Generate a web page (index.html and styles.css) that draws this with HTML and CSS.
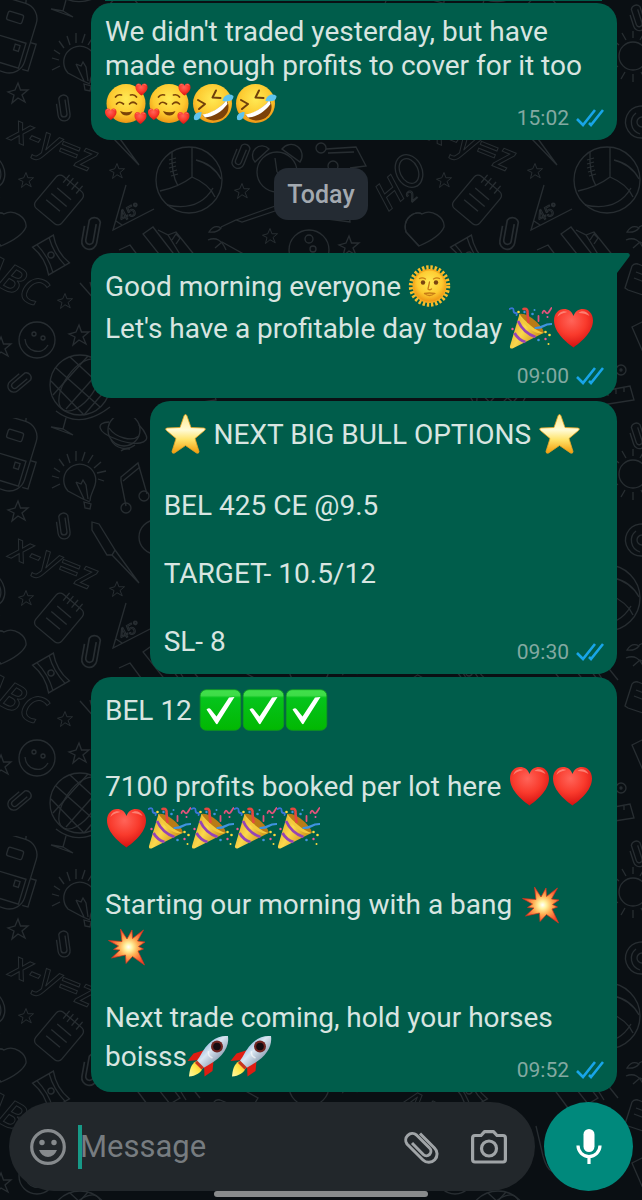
FILE: index.html
```html
<!DOCTYPE html>
<html lang="en">
<head>
    <meta charset="UTF-8">
    <meta name="viewport" content="width=device-width, initial-scale=1.0">
    <title>Chat</title>
    <link rel="stylesheet" href="styles.css">
</head>
<body>
    <!-- emoji and icon sprites -->
    <svg class="sprites" aria-hidden="true">
        <defs>
            <radialGradient id="g-face" cx="50%" cy="38%" r="62%">
                <stop offset="0" stop-color="#ffea55"/><stop offset=".65" stop-color="#fdc92f"/><stop offset="1" stop-color="#ee9514"/>
            </radialGradient>
            <radialGradient id="g-heart" cx="45%" cy="30%" r="75%">
                <stop offset="0" stop-color="#ff6459"/><stop offset=".5" stop-color="#f93a2c"/><stop offset="1" stop-color="#cf0a0c"/>
            </radialGradient>
            <linearGradient id="g-star" x1="0" y1="0" x2="0" y2="1">
                <stop offset="0" stop-color="#ffe98a"/><stop offset=".4" stop-color="#fffbd5"/><stop offset=".65" stop-color="#ffe36a"/><stop offset="1" stop-color="#f39a08"/>
            </linearGradient>
            <linearGradient id="g-check" x1="0" y1="0" x2="0" y2="1">
                <stop offset="0" stop-color="#3fe04a"/><stop offset=".14" stop-color="#3fdc48"/><stop offset=".2" stop-color="#05c41c"/><stop offset="1" stop-color="#02b802"/>
            </linearGradient>
            <linearGradient id="g-cone" x1="0" y1="0" x2="1" y2=".6">
                <stop offset="0" stop-color="#d99a1c"/><stop offset=".5" stop-color="#fbd84c"/><stop offset="1" stop-color="#c98a14"/>
            </linearGradient>
            <radialGradient id="g-burst" cx="55%" cy="50%" r="52%">
                <stop offset="0" stop-color="#ffffff"/><stop offset=".2" stop-color="#fff3a0"/><stop offset=".5" stop-color="#ffae52"/><stop offset="1" stop-color="#f5452a"/>
            </radialGradient>
            <linearGradient id="g-rocket" x1="0" y1="0" x2="1" y2="1">
                <stop offset="0" stop-color="#3f86c9"/><stop offset=".45" stop-color="#d9e6f2"/><stop offset="1" stop-color="#4d5f7c"/>
            </linearGradient>
            <linearGradient id="g-flame" x1="1" y1="0" x2="0" y2="1">
                <stop offset="0" stop-color="#ff9a1a"/><stop offset=".5" stop-color="#ffe94a"/><stop offset="1" stop-color="#fff9a8"/>
            </linearGradient>
        </defs>
        <symbol id="heart" viewBox="0 0 42 42">
            <path fill="url(#g-heart)" d="M21 40.500C15 36 1.500 26 1.500 13.500C1.500 6.500 6 2 11.500 2C16 2 19.500 4.500 21 9C22.500 4.500 26 2 30.500 2C36 2 40.500 6.500 40.500 13.500C40.500 26 27 36 21 40.500Z"/>
            <path fill="#ff9c90" opacity=".7" d="M5 10C6 5 11 3 15 5C12 6 8 6 5 10ZM26 6C29 3 35 4 37 9C34 7 30 6 26 6Z"/>
        </symbol>
        <symbol id="hearts-face" viewBox="0 0 42 42">
            <circle cx="20.500" cy="20.500" r="19.500" fill="url(#g-face)"/>
            <g fill="none" stroke="#7a4308" stroke-width="1.700" stroke-linecap="round">
                <path d="M10 14Q12 11 16 12M25 12Q29 11 31 14M11 21Q14 17.500 18 21M24 21Q27.500 17.500 31 21"/>
            </g>
            <path fill="#7a4308" d="M14.500 28Q21 30.500 27 28Q25 32.500 21 32.500Q16.500 32.500 14.500 28Z"/>
            <use href="#heart" x="29.500" y="0" width="13" height="13"/>
            <use href="#heart" x="-1" y="25" width="12.500" height="12.500"/>
            <use href="#heart" x="28.500" y="28.500" width="13" height="13"/>
        </symbol>
        <symbol id="rofl" viewBox="0 0 42 42">
            <circle cx="21" cy="20.500" r="19.500" fill="url(#g-face)"/>
            <path fill="none" stroke="#70400c" stroke-width="2" stroke-linecap="round" stroke-linejoin="round" d="M6.500 17L13.500 21L7.500 26M24.500 7.500L21 14.500L29 15"/>
            <path fill="#7c420a" d="M11 32C19 31 29 25 35 17C39 23 37 31 31 35C24 39 15 38 11 32Z"/>
            <path fill="#fff" d="M11 31.500C19 30.500 29 25 35 17L36 21C30 29 22 34 13.500 34.500Z"/>
            <path fill="#5fc4ee" d="M31 18C32 12 38 10 42 13C42 18 37 19 31 18ZM10 29C4 29 1 33 3 37C8 38 10 34 10 29Z"/>
        </symbol>
        <symbol id="sun-face" viewBox="0 0 42 42">
            <circle cx="21" cy="21" r="18.200" fill="none" stroke="#f9bd2b" stroke-width="5" stroke-dasharray="2.300 1.800"/>
            <circle cx="21" cy="21" r="17" fill="#f5a91f"/>
            <circle cx="21" cy="21" r="15.500" fill="url(#g-face)"/>
            <g fill="#7a4410"><circle cx="14.500" cy="17.500" r="2.200"/><circle cx="27.500" cy="17.500" r="2.200"/></g>
            <path fill="none" stroke="#c97d16" stroke-width="1.300" stroke-linecap="round" d="M11 13.500Q14 12 17 14M25 14Q28 12 31 13.500M21 17L19.500 24Q21 25.500 23 24M16 28.500Q21 32.500 26 28.500Q21 27.500 16 28.500"/>
        </symbol>
        <symbol id="party" viewBox="0 0 42 42">
            <path fill="url(#g-cone)" d="M10 7C16 6 34 20 34 26L3 41.500Q0 42 .500 39Z"/>
            <path fill="none" stroke="#9544b5" stroke-width="2.800" d="M8.500 14Q14 26 26 30M5 26Q9 33 16 35"/>
            <path fill="#b97b16" d="M10 7C18 5 35 20 34 26C27 27 12 15 10 7Z"/>
            <path fill="#f3c93c" d="M10 7C14 13 26 24 34 26C27 29 11 17 10 7Z"/>
            <g fill="none" stroke-linecap="round">
                <path stroke="#e54840" stroke-width="2.600" d="M14 2Q19 1 18 7L19 15"/>
                <path stroke="#3f93e0" stroke-width="2.200" d="M26 21Q31 21 34 19T42 17"/>
                <path stroke="#e4537c" stroke-width="1.800" d="M29 14V9M33 6Q34 2 36 5T40 4L42 1"/>
                <path stroke="#3a76d8" stroke-width="1.800" d="M0 2Q4 0 4 3T6 6T7 8"/>
            </g>
            <g fill="#ffd83d"><circle cx="9" cy="5" r="1.300"/><circle cx="36" cy="25" r="1.300"/><circle cx="40" cy="28" r="1.300"/><circle cx="39" cy="37" r="1"/></g>
            <g fill="#3f93e0"><circle cx="15" cy="5" r="1.200"/><circle cx="23" cy="7" r="1.300"/><circle cx="29" cy="33" r="1.300"/><circle cx="25" cy="3" r="1"/></g>
            <g fill="#ef5a9a"><circle cx="3" cy="22" r="1.200"/><circle cx="38" cy="10" r="1"/><circle cx="36" cy="32" r="1.200"/></g>
        </symbol>
        <symbol id="star" viewBox="0 0 42 42">
            <path fill="url(#g-star)" stroke="#eba522" stroke-width=".8" stroke-linejoin="round" d="M21 1.500Q22 1.500 22.500 3L26.500 14.500L39.500 15Q42 15.500 40 17.500L30.500 25.500L34.500 38.500Q34.500 41 32 40L21 32.500L10 40Q7.500 41 7.500 38.500L11.500 25.500L2 17.500Q0 15.500 2.500 15L15.500 14.500L19.500 3Q20 1.500 21 1.500Z"/>
        </symbol>
        <symbol id="check" viewBox="0 0 42 42">
            <rect x=".7" y=".7" width="40.600" height="40.600" rx="6" fill="url(#g-check)" stroke="#119b1d" stroke-width=".8"/>
            <path fill="#fff" d="M7 20.500Q9.500 18.500 11 20L17 27.500L29.500 8.500L35 8L18.500 34Q17.500 36.500 16 34Z"/>
        </symbol>
        <symbol id="burst" viewBox="0 0 42 42">
            <path fill="url(#g-burst)" stroke="#d6341f" stroke-width=".7" d="M15 4L21.500 14L26.500 5L27 13.500L38 5L32 16L39.500 17L33 21.500L38 24L32.500 26L39 40L27 31.500L20.500 38.500L20 30L6 33L14.500 25L8 24.500L13 21L3 15.500L16.500 16.500Z"/>
        </symbol>
        <symbol id="rocket" viewBox="0 0 42 42">
            <path fill="#e01d12" d="M17 15L6 18.500L0 26L12 25ZM26 26L25 36L17 41.500L16.500 30Z"/>
            <path fill="url(#g-flame)" d="M9 26C3 29 2 36 1.500 41.500C8 41 14 38 15.500 32Z"/>
            <path fill="url(#g-rocket)" d="M40.500 1C30 0 20 6 12 22L8.500 27L15 33.500L21 30C36 22 42 11 40.500 1Z"/>
            <path fill="#c7361e" d="M9.500 25.500L16.500 32.500L14 34.500L7.500 28Z"/>
            <circle cx="29.500" cy="11.500" r="6" fill="#702521"/><circle cx="29.500" cy="11.500" r="3.800" fill="#160b10"/>
            <path fill="none" stroke="#fff" stroke-width="1.600" opacity=".6" d="M21 16Q20 21 25 23"/>
        </symbol>
        <symbol id="ticks" viewBox="0 0 28 18">
            <path fill="none" stroke="#18a5e8" stroke-width="2.600" d="M1 10L7 16L19 1M13 14L15 16L27 1"/>
        </symbol>
    </svg>

    <!-- doodle wallpaper, a 418px tile -->
    <svg class="wallpaper" aria-hidden="true">
        <defs>
            <path id="d-star" d="M0-10L2.500-3L10-3L4 2L7 9L0 5L-6 10L-4 2L-10-1L-3-3Z"/>
            <path id="d-clip" d="M3-7V7A3 3 0 0 1-3 7V-9A5 5 0 0 1 6-9V8A6 6 0 0 1-6 8V-4"/>
            <g id="doodles">
                <g transform="translate(-4 32) rotate(17)">
                    <rect x="-36" y="-36" width="72" height="72" rx="16"/>
                    <path d="M-10-36Q-8-43 0-43H14Q20-42 20-36M-30 2H32V28H-30ZM36 0H42V28H36M22 6H27V12H22Z"/>
                    <rect x="6" y="-24" width="16" height="9" rx="2"/>
                </g>
                <g transform="translate(124 12)"><circle r="16"/><path d="M-15-8C-28-8-28 2-8 9C12 17 26 13 22 5Q20 0 15-5M-15-2C-8 8 8 12 15 6M-13 10A16 16 0 0 0 11 15"/></g>
                <g transform="translate(79 62)">
                    <path d="M4 19L-11 11A16 16 0 1 1 16 5C14 12 11 15 11 21M4 19L11 22M5 22L12 24L11 29L6 28ZM-3 2L5 19M-3 2L2 4L4 0L7 5L9 19"/>
                    <path d="M-19 4L-27 8M-20-2L-27-4M-19-8L-25-12M-15-14L-20-21M-9-17L-12-26M-3-19L-3-29M3-19L6-28M9-17L14-25M15-12L22-18M18-7L27-9M19-1L25 1"/>
                </g>
                <path d="M121 33Q124 30 130 31M126 88L121 63V59L138 45L147 76M123 63L140 49"/>
                <circle cx="126" cy="90" r="5"/><circle cx="144" cy="78" r="5"/>
                <path d="M92 104L99 106L115 132L112 137L107 137L92 112ZM115 132L139 165L112 137"/>
                <circle cx="156" cy="119" r="17"/>
                <use href="#d-star" x="18" y="93"/><use href="#d-star" x="79" y="335"/><use href="#d-star" x="349" y="246"/><use href="#d-star" x="1" y="347"/>
                <use href="#d-star" transform="translate(26 180) scale(.75)"/><use href="#d-star" transform="translate(117 171) scale(.75)"/>
                <use href="#d-star" transform="translate(242 191) scale(.75)"/><use href="#d-star" transform="translate(270 236) scale(.75)"/><use href="#d-star" transform="translate(65 301) scale(.75)"/>
                <use href="#d-clip" transform="translate(63 107) rotate(-8)"/><use href="#d-clip" transform="translate(241 155) rotate(22)"/>
                <use href="#d-clip" transform="translate(91 232) rotate(10) scale(1.250)"/><use href="#d-clip" transform="translate(20 381) rotate(50)"/><use href="#d-clip" transform="translate(219 17) rotate(-18)"/>
                <g transform="translate(8 139) rotate(22)"><text class="d-formula">x-y=z</text></g>
                <g transform="translate(-24 275) rotate(28)"><text class="d-formula">ABC</text></g>
                <g transform="translate(388 212) rotate(-40)"><text class="d-formula">H</text><text class="d-small" x="24" y="8">2</text></g>
                <ellipse cx="409" cy="171" rx="13" ry="17" transform="rotate(-25 409 171)"/><ellipse cx="409" cy="171" rx="9" ry="13" transform="rotate(-25 409 171)"/>
                <g transform="translate(59 200) rotate(40)"><rect x="-17" y="-21" width="34" height="42" rx="5"/><path d="M-9-8H9M-10 0H10M-10 8H8M-8-26V-16M-3-26V-16M3-26V-16M9-26V-16"/></g>
                <path d="M126 185L113 230L154 209M116 221L122 225"/>
                <g transform="translate(122 222) rotate(-28)"><text class="d-small">45°</text></g>
                <g transform="translate(189 180)"><circle r="33"/><path d="M3-32V-3Q-10 7-29 11M3-3Q20 4 26 17M7-20Q24-16 32-1M-22 25Q10 32 24 8M-17-28Q-18-6-11 6M-20-20L-13-22M-20-16L-13-18M-20-12L-13-14M-19-8L-12-10M-18-4L-11-6"/></g>
                <g transform="translate(277 172)"><circle r="20"/><path d="M-22-10A9 9 0 1 1-8-23ZM5-23A9 9 0 1 1 23-10ZM0 0L-2-14M0 0L8 6"/></g>
                <path d="M326 149L356 147L366 166L350 168M328 153L354 152"/><circle cx="321" cy="148" r="5"/><circle cx="333" cy="166" r="5"/>
                <path d="M209 232Q214 224 221 228Q217 233 209 232ZM221 227L236 220L242 222L278 210M236 220L278 205"/>
                <circle cx="309" cy="250" r="20"/><circle cx="309" cy="239" r="4"/><circle cx="313" cy="249" r="3"/>
                <path d="M1 246L-12 232C-16 218-3 210 4 214C14 208 27 218 26 227Q22 237 1 246Z"/>
                <path d="M419 246L406 232C402 218 415 210 422 214"/>
                <path d="M320 218L350 222L348 205"/>
                <g transform="translate(51 255) rotate(-30)"><path d="M-12-16H12Q6 0 12 16H-12Q-6 0-12-16ZM-7-16Q-3 0-7 16M7-16Q3 0 7 16"/><circle r="3"/></g>
                <path d="M143 234L153 227L180 262L170 268ZM158 230L168 235L186 264M168 235L176 232L200 262M119 250L130 245L150 272M172 240L176 234L180 238L176 244"/>
                <path d="M215 248L222 242L258 262L250 275"/>
                <circle cx="37" cy="340" r="18"/><circle cx="34" cy="334" r="2"/><circle cx="43" cy="338" r="2"/><path d="M25 339C26 352 42 356 48 345"/>
                <path d="M80 283L95 300L90 282"/>
                <g transform="translate(80 385)"><circle r="30"/><ellipse rx="15" ry="30" transform="rotate(35)"/><path d="M-24-17L20 22M-29-4L4 30M-10-28L29 8M-27 10L8-29M-14 24L24-19M4 30L30 0M-24 26Q0 45 30 22M-14 33L-17 44L-29 42L-7 50L-17 44"/></g>
                <g transform="translate(215 56)"><circle r="14"/><path d="M0-18V-25M7-16L11-23M14-11L20-16M17-4L25-6M-7-16L-11-23M-14-11L-20-16M-17-4L-25-6M-18 3H-26M-15 10L-21 14M-8 16L-12 23M0 18V26M8 16L12 23"/></g>
                <path d="M224 138A16 16 0 1 1 236 112Q238 128 228 126M222 134A12 12 0 0 1 218 113"/><circle cx="224" cy="122" r="5"/>
                <path d="M207 288L214 266Q216 263 220 264L250 276L240 300L210 290ZM218 272L244 282M216 278L242 288M208 240Q220 235 226 250"/>
                <path d="M214 327L224 322L236 340L224 350Z"/><circle cx="203" cy="370" r="5"/><circle cx="203" cy="370" r="1"/>
                <path d="M180 392L212 386L216 400L184 405M190 391V396M198 389V394M206 388V392M118 290L125 320Q132 346 148 330L170 300"/>
            </g>
            <pattern id="doodle-tile" width="418" height="418" patternUnits="userSpaceOnUse">
                <use href="#doodles"/><use href="#doodles" x="-418"/><use href="#doodles" x="418"/><use href="#doodles" y="-418"/>
            </pattern>
        </defs>
        <rect class="tiles" width="100%" height="100%" fill="url(#doodle-tile)"/>
    </svg>

    <main class="chat">
        <div class="previous"></div>

        <div class="bubble">
            <p>We didn't traded yesterday, but have made enough profits to cover for it too<br>
            <svg class="emoji"><use href="#hearts-face"/></svg><svg class="emoji"><use href="#hearts-face"/></svg><svg class="emoji"><use href="#rofl"/></svg><svg class="emoji"><use href="#rofl"/></svg></p>
            <div class="meta"><time>15:02</time><svg class="ticks"><use href="#ticks"/></svg></div>
        </div>

        <div class="day">Today</div>

        <div class="bubble first">
            <svg class="tail" viewBox="0 0 13 20"><path d="M0 0H11Q14 1 12 4L0 20Z"/></svg>
            <p>Good morning everyone <svg class="emoji"><use href="#sun-face"/></svg><br>
            Let's have a profitable day today <svg class="emoji"><use href="#party"/></svg><svg class="emoji"><use href="#heart"/></svg></p>
            <p><br></p>
            <div class="meta"><time>09:00</time><svg class="ticks"><use href="#ticks"/></svg></div>
        </div>

        <div class="bubble signal">
            <p><svg class="emoji"><use href="#star"/></svg> NEXT BIG BULL OPTIONS <svg class="emoji"><use href="#star"/></svg></p>
            <p><br>BEL 425 CE @9.5</p>
            <p><br>TARGET- 10.5/12</p>
            <p><br>SL- 8</p>
            <div class="meta"><time>09:30</time><svg class="ticks"><use href="#ticks"/></svg></div>
        </div>

        <div class="bubble">
            <p>BEL 12 <svg class="emoji"><use href="#check"/></svg><svg class="emoji"><use href="#check"/></svg><svg class="emoji"><use href="#check"/></svg></p>
            <p><br>7100 profits booked per lot here <svg class="emoji"><use href="#heart"/></svg><svg class="emoji"><use href="#heart"/></svg><br>
            <svg class="emoji"><use href="#heart"/></svg><svg class="emoji"><use href="#party"/></svg><svg class="emoji"><use href="#party"/></svg><svg class="emoji"><use href="#party"/></svg><svg class="emoji"><use href="#party"/></svg></p>
            <p><br>Starting our morning with a bang <svg class="emoji"><use href="#burst"/></svg><br>
            <svg class="emoji"><use href="#burst"/></svg></p>
            <p><br>Next trade coming, hold your horses boisss<svg class="emoji"><use href="#rocket"/></svg><svg class="emoji"><use href="#rocket"/></svg></p>
            <div class="meta"><time>09:52</time><svg class="ticks"><use href="#ticks"/></svg></div>
        </div>
    </main>

    <footer>
        <form class="composer">
            <div class="field">
                <button type="button" class="icon-btn" aria-label="Emoji">
                    <svg width="36" height="36" viewBox="0 0 36 36">
                        <circle cx="18" cy="18" r="16.300" fill="none" stroke="currentColor" stroke-width="3.200"/>
                        <circle cx="12" cy="13.500" r="2.700" fill="currentColor"/><circle cx="24" cy="13.500" r="2.700" fill="currentColor"/>
                        <path d="M9 21H27Q24 28 18 28T9 21Z" fill="currentColor"/>
                    </svg>
                </button>
                <span class="caret"></span>
                <input type="text" placeholder="Message" aria-label="Message">
                <button type="button" class="icon-btn light" aria-label="Attach">
                    <svg width="38" height="38" viewBox="0 0 38 38" fill="none" stroke="currentColor" stroke-width="3">
                        <path d="M18 5.500L32.500 20A8.300 8.300 0 0 1 21 32L5 16A6.600 6.600 0 0 1 14.500 7L27.500 20A4.400 4.400 0 0 1 21.300 26.500L10 15"/>
                    </svg>
                </button>
                <button type="button" class="icon-btn light" aria-label="Camera">
                    <svg width="38" height="36" viewBox="0 0 38 36" fill="none" stroke="currentColor" stroke-width="3.200">
                        <path stroke-linejoin="round" d="M5 6.500H11L14.500 2.600H23.500L27 6.500H33Q35.400 6.500 35.400 9V30.500Q35.400 33 33 33H5Q2.600 33 2.600 30.500V9Q2.600 6.500 5 6.500Z"/>
                        <circle cx="19" cy="19.500" r="7.500"/>
                    </svg>
                </button>
            </div>
            <button type="button" class="mic" aria-label="Voice message">
                <svg width="28" height="38" viewBox="0 0 28 38">
                    <rect x="8.500" y="1" width="11" height="23" rx="5.500" fill="#fff"/>
                    <path d="M3 17.500A11 11 0 0 0 25 17.500M14 28.500V36" fill="none" stroke="#fff" stroke-width="3.200"/>
                </svg>
            </button>
        </form>
        <div class="handle"></div>
    </footer>
</body>
</html>
```
FILE: styles.css
```css
* {
    box-sizing: border-box;
}
body {
    font-family: Roboto, sans-serif;
    margin: 0;
    min-height: 100vh;
    display: flex;
    flex-direction: column;
    background-color: #0a0f13;
    color: #d8e5e1;
}
.sprites {
    position: absolute;
    width: 0;
    height: 0;
}
.wallpaper {
    position: fixed;
    top: 0;
    left: 0;
    width: 100%;
    height: 100%;
    z-index: -1;
    fill: none;
    stroke: #272d31;
    stroke-width: 1.3px;
}
.tiles {
    stroke: none;
}
#doodles {
    stroke: #272d31;
}
.d-formula {
    font-family: "Open Sans", sans-serif;
    font-size: 38px;
    font-style: italic;
    font-weight: 600;
    stroke-width: 1px;
}
.d-small {
    font-size: 15px;
    stroke-width: 1px;
}

/* messages */
.chat {
    display: flex;
    flex-direction: column;
}
.previous {
    height: 1px;
    margin: 0 40px 2px 105px;
    background-color: #005d4b;
}
.bubble {
    position: relative;
    margin: 0 25px 3px 91px;
    padding: 12px 14px 15px;
    border-radius: 20px;
    background-color: #005d4b;
    font-size: 28px;
    line-height: 34px;
}
.bubble p {
    margin: 0;
}
.first {
    border-top-right-radius: 0;
}
.tail {
    position: absolute;
    top: 0;
    left: 100%;
    width: 13px;
    height: 20px;
    fill: #005d4b;
}
.signal {
    align-self: flex-end;
    padding-right: 36px;
}
.emoji {
    width: 43px;
    height: 42px;
    vertical-align: -11px;
}
.meta {
    position: absolute;
    right: 13px;
    bottom: 9px;
    display: flex;
    align-items: center;
    gap: 7px;
    font-size: 21px;
    line-height: 26px;
    color: #83a9a1;
}
.ticks {
    width: 28px;
    height: 18px;
}
.day {
    align-self: center;
    margin: 25px 0 33px;
    padding: 2px 13px 0;
    border-radius: 14px;
    background-color: #242b33;
    color: #a3a9b0;
    font-size: 25px;
    font-weight: 500;
    line-height: 50px;
}

/* bottom bar */
footer {
    margin-top: auto;
}
.composer {
    display: flex;
    gap: 9px;
    padding: 0 9px;
}
.field {
    flex: 1;
    display: flex;
    align-items: center;
    min-width: 0;
    height: 89px;
    padding: 0 27px 0 21px;
    border-radius: 45px;
    background-color: #22272b;
}
.icon-btn {
    display: flex;
    padding: 0;
    border: none;
    background: none;
    color: #868a8d;
    cursor: pointer;
}
.light {
    color: #a0a4a7;
    margin-left: 30px;
}
.caret {
    width: 4px;
    height: 44px;
    margin-left: 12px;
    background-color: #179987;
}
.field input {
    flex: 1;
    min-width: 0;
    margin-left: -2px;
    padding: 0;
    border: none;
    outline: none;
    background: none;
    color: #d8e5e1;
    font-family: inherit;
    font-size: 31px;
}
.field input::placeholder {
    color: #777c80;
}
.mic {
    display: flex;
    align-items: center;
    justify-content: center;
    width: 89px;
    height: 89px;
    padding: 0;
    border: none;
    border-radius: 50%;
    background-color: #00897c;
    cursor: pointer;
}
.handle {
    width: 214px;
    height: 6px;
    margin: 0 auto 3px;
    border-radius: 3px;
    background-color: #898b8c;
}
```
